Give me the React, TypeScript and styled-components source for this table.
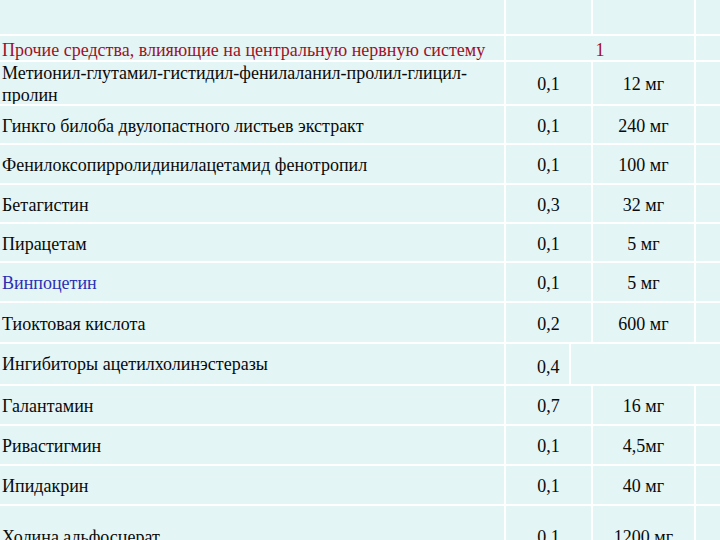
import * as React from "react";
import styled, { createGlobalStyle } from "styled-components";

const GlobalStyle = createGlobalStyle`
  html, body {
    margin: 0;
    padding: 0;
    background: #ffffff;
  }
  body {
    width: 720px;
    height: 540px;
    overflow: hidden;
  }
`;

const Table = styled.div`
  width: 720px;
  display: flex;
  flex-direction: column;
  gap: 2px;
  background: #ffffff;
  font-family: "Liberation Serif", "DejaVu Serif", serif;
`;

// columns: name | value | dose | spare
const Row = styled.div<{ $h: number; $cols?: string }>`
  display: grid;
  grid-template-columns: ${(p) => p.$cols || "504px 85px 101px 1fr"};
  column-gap: 2px;
  height: ${(p) => p.$h}px;
`;

const Cell = styled.div<{ $align?: "left" | "center"; $color?: string; $span?: number; $pad?: number; $top?: number }>`
  background: #e3f5f5;
  display: flex;
  align-items: center;
  justify-content: ${(p) => (p.$align === "left" ? "flex-start" : "center")};
  padding-left: ${(p) => (p.$pad !== undefined ? p.$pad : 0)}px;
  padding-top: ${(p) => (p.$top !== undefined ? p.$top : 2)}px;
  font-family: "Liberation Serif", "DejaVu Serif", serif;
  font-size: 18px;
  line-height: 22px;
  color: ${(p) => p.$color || "#0a0a0a"};
  grid-column: ${(p) => (p.$span ? `span ${p.$span}` : "auto")};
  white-space: nowrap;
  overflow: hidden;
`;

const Name = styled(Cell).attrs({ $align: "left" as const, $pad: 2 })``;

const RED = "#9e1028";
const BLUE = "#2a2fb4";

type Item = { name: string; v: string; dose: string; h: number; color?: string };

const items: Item[] = [
  { name: "Гинкго билоба двулопастного листьев экстракт", v: "0,1", dose: "240 мг", h: 37 },
  { name: "Фенилоксопирролидинилацетамид фенотропил", v: "0,1", dose: "100 мг", h: 38 },
  { name: "Бетагистин", v: "0,3", dose: "32 мг", h: 37 },
  { name: "Пирацетам", v: "0,1", dose: "5 мг", h: 37 },
  { name: "Винпоцетин", v: "0,1", dose: "5 мг", h: 38, color: BLUE },
  { name: "Тиоктовая кислота", v: "0,2", dose: "600 мг", h: 39 },
];

const items2: Item[] = [
  { name: "Галантамин", v: "0,7", dose: "16 мг", h: 38 },
  { name: "Ривастигмин", v: "0,1", dose: "4,5мг", h: 38 },
  { name: "Ипидакрин", v: "0,1", dose: "40 мг", h: 38 },
  { name: "Холина альфосцерат", v: "0,1", dose: "1200 мг", h: 60 },
];

const DrugRow = ({ it }: { it: Item }) => (
  <Row $h={it.h}>
    <Name $color={it.color}>{it.name}</Name>
    <Cell>{it.v}</Cell>
    <Cell>{it.dose}</Cell>
    <Cell />
  </Row>
);

export default function App() {
  return (
    <>
      <GlobalStyle />
      <Table>
        <Row $h={34}>
          <Cell />
          <Cell />
          <Cell />
          <Cell />
        </Row>
        <Row $h={24}>
          <Name $color={RED} $top={4}>Прочие средства, влияющие на центральную нервную систему</Name>
          <Cell $span={2} $color={RED} $top={4}>1</Cell>
          <Cell />
        </Row>
        <Row $h={42}>
          <Name>
            <span>
              Метионил-глутамил-гистидил-фенилаланил-пролил-глицил-
              <br />
              пролин
            </span>
          </Name>
          <Cell>0,1</Cell>
          <Cell>12 мг</Cell>
          <Cell />
        </Row>
        {items.map((it) => (
          <DrugRow key={it.name} it={it} />
        ))}
        <Row $h={40} $cols="504px 63px 1fr">
          <Name $top={0}>Ингибиторы ацетилхолинэстеразы</Name>
          <Cell $align="left" $pad={31} $top={6}>0,4</Cell>
          <Cell />
        </Row>
        {items2.map((it) => (
          <DrugRow key={it.name} it={it} />
        ))}
      </Table>
    </>
  );
}
